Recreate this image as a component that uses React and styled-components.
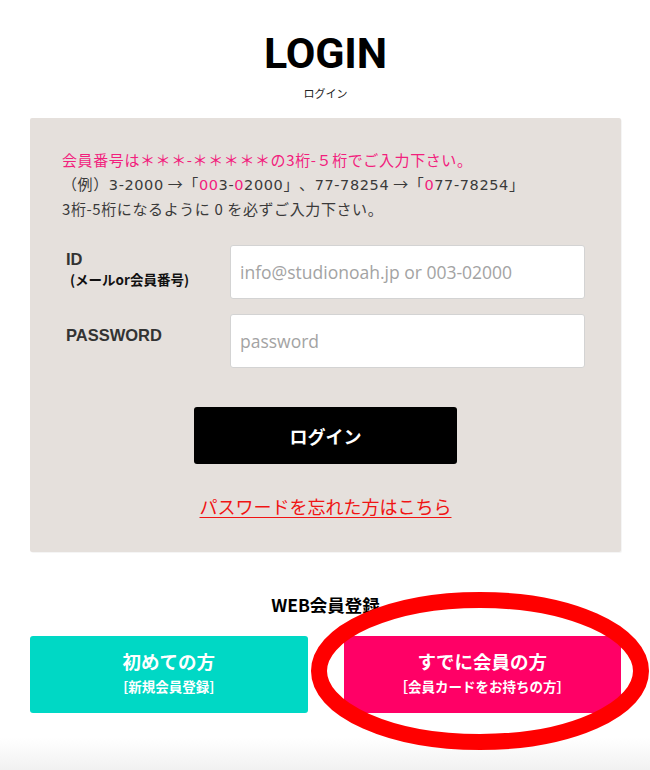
import React from "react";
import styled, { createGlobalStyle } from "styled-components";

const GlobalStyle = createGlobalStyle`
  html, body { margin: 0; padding: 0; }
  body {
    font-family: "Noto Sans CJK JP", "Noto Sans", sans-serif;
    color: #333;
    background: #fff;
    text-spacing-trim: space-all;
  }
`;

const Page = styled.div`
  min-height: 770px;
  box-sizing: border-box;
  padding: 0 29px 0 30px;
  background: linear-gradient(to bottom, #fff 0, #fff 738px, #f1f1f1 770px);
  overflow: hidden;
`;

const Header = styled.header`
  display: flex;
  flex-direction: column;
  align-items: center;
  padding-top: 29px;
`;

const Title = styled.h1`
  margin: 0;
  font-family: Roboto, "Liberation Sans", sans-serif;
  font-weight: 700;
  font-size: 43px;
  line-height: 48px;
  color: #000;
  letter-spacing: -0.2px;
`;

const Subtitle = styled.div`
  margin-top: 9px;
  font-size: 11px;
  line-height: 14px;
  color: #222;
`;

const Panel = styled.section`
  margin-top: 18px;
  background: #e5e0dc;
  border-radius: 2px;
  box-shadow: 1px 1px 0 rgba(0, 0, 0, 0.04);
  padding: 30px 36px 34px 32px;
`;

const Notice = styled.div`
  font-family: "Noto Sans CJK JP", sans-serif;
  font-size: 15px;
  line-height: 24px;
  letter-spacing: 0.6px;
  color: #3a3a3a;
`;

const Latin = styled.span`
  font-family: "DejaVu Sans", "Noto Sans CJK JP", sans-serif;
  font-size: 14.5px;
  color: ${(p) => (p.$accent ? "#f2207d" : "inherit")};
`;

const NoticeLine = styled.p`
  margin: 0;
  white-space: nowrap;
  color: ${(p) => (p.$accent ? "#f2207d" : "inherit")};
`;

const Form = styled.form`
  margin-top: 24px;
  padding-left: 4px;
  display: flex;
  flex-direction: column;
  gap: 15px;
`;

const Row = styled.div`
  display: grid;
  grid-template-columns: 164px 1fr;
  align-items: start;
`;

const Label = styled.label`
  display: flex;
  flex-direction: column;
  padding-top: ${(p) => p.$top}px;
  font-family: "Liberation Sans", "Noto Sans CJK JP", sans-serif;
  font-weight: 700;
  font-size: 16.5px;
  line-height: 18px;
  color: #333;
`;

const LabelNote = styled.span`
  margin-top: 3px;
  padding-left: 4px;
  font-family: "Noto Sans CJK JP", sans-serif;
  font-size: 13.5px;
  line-height: 16px;
  color: #111;
`;

const Input = styled.input`
  box-sizing: border-box;
  width: 100%;
  height: 54px;
  border: 1px solid #d3d3d3;
  border-radius: 3px;
  background: #fff;
  padding: 0 9px;
  font-family: "Open Sans", "Liberation Sans", sans-serif;
  font-size: 17.5px;
  color: #333;
  outline: none;
  &::placeholder { color: #a3a3a3; }
`;

const Actions = styled.div`
  display: flex;
  flex-direction: column;
  align-items: center;
  margin-top: 39px;
  padding-left: 4px;
`;

const LoginButton = styled.button`
  width: 263px;
  height: 57px;
  border: none;
  border-radius: 3px;
  background: #000;
  color: #fff;
  font-family: "Noto Sans CJK JP", sans-serif;
  font-weight: 700;
  font-size: 18px;
  cursor: pointer;
`;

const ForgotLink = styled.a`
  margin-top: 30px;
  font-size: 18px;
  line-height: 24px;
  color: #f01414;
  text-decoration: underline;
  text-underline-offset: 3px;
  text-decoration-thickness: 1px;
`;

const Register = styled.section`
  margin-top: 42px;
  display: flex;
  flex-direction: column;
  align-items: center;
`;

const RegisterTitle = styled.h2`
  margin: 0;
  font-size: 17.5px;
  line-height: 22px;
  font-weight: 700;
  color: #000;
`;

const ButtonRow = styled.div`
  position: relative;
  margin-top: 20px;
  width: 100%;
  display: grid;
  grid-template-columns: 1fr 1fr;
  gap: 36px;
`;

const RegButton = styled.a`
  height: 77px;
  box-sizing: border-box;
  padding-bottom: 6px;
  border-radius: ${(p) => (p.$square ? "0" : "3px")};
  background: ${(p) => p.$bg};
  color: #fff;
  display: flex;
  flex-direction: column;
  align-items: center;
  justify-content: center;
  text-decoration: none;
  font-weight: 700;
`;

const RegMain = styled.span`
  font-size: 18.5px;
  line-height: 24px;
`;

const RegSub = styled.span`
  margin-top: 5px;
  font-size: 13.5px;
  line-height: 16px;
`;

const Annotation = styled.svg`
  position: absolute;
  left: 280px;
  top: -43px;
  overflow: visible;
  pointer-events: none;
`;

export default function App() {
  return (
    <>
      <GlobalStyle />
      <Page>
        <Header>
          <Title>LOGIN</Title>
          <Subtitle>ログイン</Subtitle>
        </Header>
        <Panel>
          <Notice>
            <NoticeLine $accent>会員番号は＊＊＊-＊＊＊＊＊の3桁-５桁でご入力下さい。</NoticeLine>
            <NoticeLine>
              （例）<Latin>3-2000</Latin> →「<Latin $accent>00</Latin><Latin>3-</Latin><Latin $accent>0</Latin><Latin>2000</Latin>」、<Latin>77-78254</Latin> →「<Latin $accent>0</Latin><Latin>77-78254</Latin>」
            </NoticeLine>
            <NoticeLine>3桁-5桁になるように 0 を必ずご入力下さい。</NoticeLine>
          </Notice>
          <Form onSubmit={(e) => e.preventDefault()}>
            <Row>
              <Label $top={5}>
                ID
                <LabelNote>(メールor会員番号)</LabelNote>
              </Label>
              <Input placeholder="info@studionoah.jp or 003-02000" />
            </Row>
            <Row>
              <Label $top={12}>PASSWORD</Label>
              <Input type="password" placeholder="password" />
            </Row>
          </Form>
          <Actions>
            <LoginButton type="button">ログイン</LoginButton>
            <ForgotLink href="#">パスワードを忘れた方はこちら</ForgotLink>
          </Actions>
        </Panel>
        <Register>
          <RegisterTitle>WEB会員登録</RegisterTitle>
          <ButtonRow>
            <RegButton href="#" $bg="#00d8c5">
              <RegMain>初めての方</RegMain>
              <RegSub>[新規会員登録]</RegSub>
            </RegButton>
            <RegButton href="#" $bg="#ff0066" $square>
              <RegMain>すでに会員の方</RegMain>
              <RegSub>［会員カードをお持ちの方］</RegSub>
            </RegButton>
            <Annotation width="340" height="160" viewBox="0 0 340 160">
              <ellipse cx="170" cy="78" rx="161" ry="71" fill="none" stroke="#ff0000" strokeWidth="16" />
            </Annotation>
          </ButtonRow>
        </Register>
      </Page>
    </>
  );
}
